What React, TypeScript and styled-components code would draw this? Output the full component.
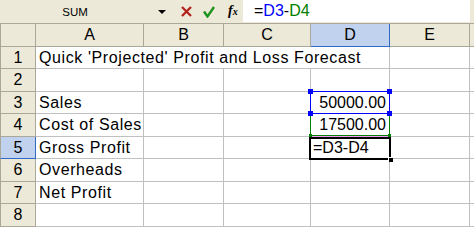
import styled, { createGlobalStyle } from 'styled-components';

const GlobalStyle = createGlobalStyle`
  html, body {
    margin: 0;
    padding: 0;
    background: #ffffff;
    overflow: hidden;
  }
  body {
    font-family: "Liberation Sans", Arial, sans-serif;
    color: #000;
  }
`;

const COLUMNS = ['A', 'B', 'C', 'D', 'E', ''];
const ROW_HEIGHTS = [22, 23, 22, 23, 22, 23, 22, 23];

type Row = { n: number; a?: string; d?: string; span?: boolean };

const rows: Row[] = [
  { n: 1, a: "Quick 'Projected' Profit and Loss Forecast", span: true },
  { n: 2 },
  { n: 3, a: 'Sales', d: '50000.00' },
  { n: 4, a: 'Cost of Sales', d: '17500.00' },
  { n: 5, a: 'Gross Profit', d: '=D3-D4' },
  { n: 6, a: 'Overheads' },
  { n: 7, a: 'Net Profit' },
  { n: 8 },
];

const Window = styled.div`
  width: 474px;
  height: 227px;
  overflow: hidden;
  background: #ffffff;
`;

const FormulaBar = styled.div`
  display: flex;
  align-items: center;
  height: 23px;
  background: #ece9d8;
  border-bottom: 1px solid #aca899;
`;

const NameBox = styled.div`
  width: 150px;
  text-align: center;
  font-size: 11.5px;
  line-height: 14px;
`;

const DropArrow = styled.span`
  margin-left: 8px;
  width: 0;
  height: 0;
  border-left: 4px solid transparent;
  border-right: 4px solid transparent;
  border-top: 4px solid #000;
`;

const BarIcon = styled.span<{ $gap: number; $w: number }>`
  display: flex;
  align-items: center;
  justify-content: center;
  margin-left: ${p => p.$gap}px;
  width: ${p => p.$w}px;
  height: 12px;
`;

const Fx = styled.span`
  margin-left: 13px;
  width: 12px;
  font-family: "Liberation Serif", "Times New Roman", serif;
  font-style: italic;
  font-weight: bold;
  font-size: 14px;
  line-height: 14px;
  small {
    font-size: 10px;
  }
`;

const FormulaInput = styled.div`
  align-self: flex-start;
  margin-left: 3px;
  width: 227px;
  height: 22px;
  background: #ffffff;
  padding-left: 11px;
  box-sizing: border-box;
  font-size: 16px;
  line-height: 22px;
  white-space: nowrap;
`;

const Ref = styled.span<{ $color: string }>`
  color: ${p => p.$color};
`;

const Sheet = styled.div`
  display: grid;
  grid-template-columns: 36px 108px 80px 87px 79px 80px 4px;
  grid-template-rows: 23px ${ROW_HEIGHTS.map(h => `${h}px`).join(' ')};
  font-size: 16px;
`;

const Corner = styled.div`
  background: #ece9d8;
  border-left: 1px solid #aca899;
  border-right: 1px solid #aca899;
  border-bottom: 1px solid #aca899;
`;

const ColHeader = styled.div<{ $active?: boolean; $last?: boolean }>`
  display: flex;
  align-items: center;
  justify-content: center;
  overflow: hidden;
  background: ${p => (p.$active ? '#c1d2ee' : '#ece9d8')};
  border-right: ${p => (p.$last ? 'none' : `1px solid ${p.$active ? '#316ac5' : '#aca899'}`)};
  border-bottom: 1px solid ${p => (p.$active ? '#316ac5' : '#aca899')};
  line-height: 18px;
`;

const RowHeader = styled.div<{ $active?: boolean }>`
  display: flex;
  align-items: center;
  justify-content: center;
  background: ${p => (p.$active ? '#c1d2ee' : '#ece9d8')};
  border-left: 1px solid #aca899;
  border-right: 1px solid ${p => (p.$active ? '#316ac5' : '#aca899')};
  border-bottom: 1px solid ${p => (p.$active ? '#316ac5' : '#aca899')};
  line-height: 18px;
`;

const Cell = styled.div<{ $right?: boolean; $span?: number; $last?: boolean; $bottom?: string }>`
  position: relative;
  display: flex;
  align-items: center;
  justify-content: ${p => (p.$right ? 'flex-end' : 'flex-start')};
  grid-column: span ${p => p.$span ?? 1};
  padding: 0 3px;
  background: #ffffff;
  border-right: ${p => (p.$last ? 'none' : '1px solid #c0c0c0')};
  border-bottom: 1px solid ${p => p.$bottom ?? '#c0c0c0'};
  white-space: nowrap;
  line-height: 18px;
`;

const Label = styled.span`
  letter-spacing: 0.6px;
`;

const EditText = styled.span`
  margin-left: -1px;
`;

const Range = styled.div<{ $color: string; $width: number; $inset: string; $z: number }>`
  position: absolute;
  inset: ${p => p.$inset};
  border: ${p => p.$width}px solid ${p => p.$color};
  z-index: ${p => p.$z};
  pointer-events: none;
`;

const Knob = styled.span<{ $color: string; $size: number; $off: number; $h: 'left' | 'right'; $v: 'top' | 'bottom' }>`
  position: absolute;
  width: ${p => p.$size}px;
  height: ${p => p.$size}px;
  background: ${p => p.$color};
  ${p => p.$h}: ${p => p.$off}px;
  ${p => p.$v}: ${p => p.$off}px;
`;

const FillHandle = styled.span`
  position: absolute;
  right: -4px;
  bottom: -4px;
  width: 4px;
  height: 4px;
  background: #000;
  border-top: 1px solid #fff;
  border-left: 1px solid #fff;
`;

const corners: Array<['left' | 'right', 'top' | 'bottom']> = [
  ['left', 'top'],
  ['right', 'top'],
  ['left', 'bottom'],
  ['right', 'bottom'],
];

const CrossIcon = () => (
  <svg width="11" height="11" viewBox="0 0 11 11">
    <path d="M1 1 L10 10 M10 1 L1 10" stroke="#b3231e" strokeWidth="2.3" fill="none" />
  </svg>
);

const CheckIcon = () => (
  <svg width="12" height="12" viewBox="0 0 12 12">
    <path d="M1 5.5 L4.5 10.5 L11 1" stroke="#1c941c" strokeWidth="2.4" fill="none" />
  </svg>
);

const dOverlay = (n: number) => {
  if (n === 3) {
    return (
      <Range $color="#0000ff" $width={1} $inset="-1px -1px -1px -1px" $z={3}>
        {corners.map(([h, v]) => (
          <Knob key={h + v} $color="#0000ff" $size={5} $off={-3} $h={h} $v={v} />
        ))}
      </Range>
    );
  }
  if (n === 4) {
    return (
      <Range $color="#008000" $width={1} $inset="-1px -1px 0 -1px" $z={2}>
        {corners.map(([h, v]) => (
          <Knob key={h + v} $color="#008000" $size={3} $off={-2} $h={h} $v={v} />
        ))}
      </Range>
    );
  }
  if (n === 5) {
    return (
      <Range $color="#000000" $width={2} $inset="0 -2px -2px -2px" $z={2}>
        <FillHandle />
      </Range>
    );
  }
  return null;
};

const App = () => {
  return (
    <Window>
      <GlobalStyle />
      <FormulaBar>
        <NameBox>SUM</NameBox>
        <DropArrow />
        <BarIcon $gap={15} $w={11}>
          <CrossIcon />
        </BarIcon>
        <BarIcon $gap={11} $w={12}>
          <CheckIcon />
        </BarIcon>
        <Fx>
          f<small>x</small>
        </Fx>
        <FormulaInput>
          =<Ref $color="#0000ff">D3</Ref>-<Ref $color="#008000">D4</Ref>
        </FormulaInput>
      </FormulaBar>

      <Sheet>
        <Corner />
        {COLUMNS.map((c, i) => (
          <ColHeader key={i} $active={c === 'D'} $last={i === COLUMNS.length - 1}>
            {c}
          </ColHeader>
        ))}

        {rows.map(row => (
          <Row key={row.n} row={row} />
        ))}
      </Sheet>
    </Window>
  );
};

const Row = ({ row }: { row: Row }) => {
  const isNumber = row.d !== undefined && !row.d.startsWith('=');
  return (
    <>
      <RowHeader $active={row.n === 5}>{row.n}</RowHeader>
      {row.span ? (
        <Cell $span={4}>
          <Label>{row.a}</Label>
        </Cell>
      ) : (
        <>
          <Cell>{row.a && <Label>{row.a}</Label>}</Cell>
          <Cell />
          <Cell />
          <Cell $right={isNumber} $bottom={row.n === 4 ? '#f79cf7' : undefined}>
            {row.n === 5 ? <EditText>{row.d}</EditText> : row.d}
            {dOverlay(row.n)}
          </Cell>
        </>
      )}
      <Cell />
      <Cell $last />
    </>
  );
};

export default App;
